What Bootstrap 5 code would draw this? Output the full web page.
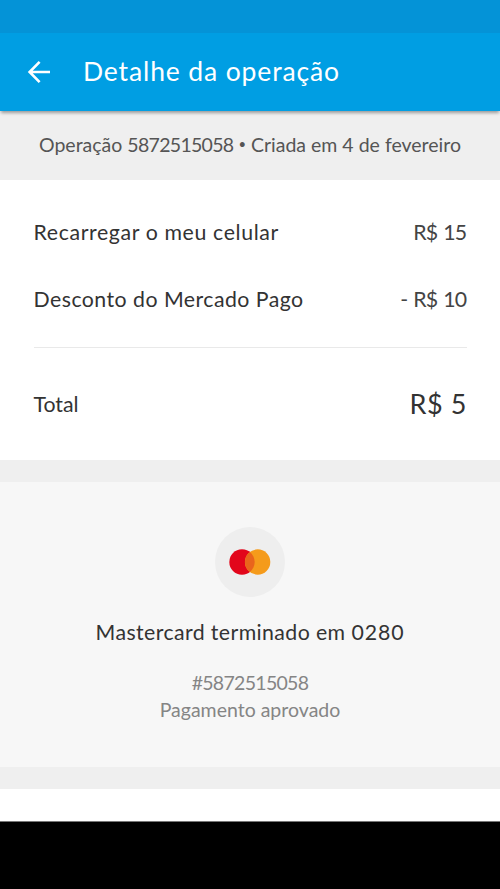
<!DOCTYPE html>
<html lang="pt-BR">
<head>
<meta charset="utf-8">
<meta name="viewport" content="width=device-width, initial-scale=1">
<title>Detalhe da operação</title>
<link href="https://cdn.jsdelivr.net/npm/bootstrap@5.3.0/dist/css/bootstrap.min.css" rel="stylesheet">
<style>
body { font-family: Lato, "Open Sans", sans-serif; color: #333; background: #efefef; height: 889px; overflow: hidden; line-height: 1; }
.status-strip { height: 33px; background: #0493d7; }
.app-bar { height: 78px; background: #009ee3; box-shadow: 0 3px 3px -1px rgba(0,0,0,.35); padding: 0 0 0 26px; z-index: 1; }
.app-title { font-size: 26.5px; margin-left: 31px; padding-bottom: 2px; letter-spacing: .87px; }
.op-info { height: 69px; font-size: 19.5px; color: #555; padding-bottom: 2px; white-space: pre; }
.op-info .digits, .pay-detail .digits { letter-spacing: -.7px; }
.op-info .dot { font-size: 13px; margin: 0 5px; }
.summary { height: 280px; padding: 0 33.5px; }
.line-item { height: 67px; font-size: 21.3px; }
.line-item.first-line { margin-top: 19px; }
.t-rec { letter-spacing: .62px; }
.t-desc { letter-spacing: .46px; }
.amount { color: #444; letter-spacing: -.7px; word-spacing: 1px; }
.divider { height: 1px; background: #e9e9e9; margin-top: 14px; }
.total-line { height: 113px; font-size: 21.3px; }
.total-amount { font-size: 27px; letter-spacing: .6px; margin-right: -.6px; padding-bottom: 2px; }
.payment { height: 285px; background: #f7f7f7; padding-top: 45px; }
.brand-icon { width: 70px; height: 70px; background: #eee; }
.pay-title { font-size: 21.3px; line-height: 26px; margin-top: 22px; letter-spacing: .4px; }
.pay-title .digits { letter-spacing: .9px; }
.pay-detail { font-size: 19.5px; line-height: 27px; color: #858585; margin-top: 24px; }
.section-gap { height: 22px; background: #efefef; }
.page-end { height: 33px; border-bottom: 1px solid #777; }
.nav-strip { background: #000; }
</style>
<script src="https://cdn.jsdelivr.net/npm/bootstrap@5.3.0/dist/js/bootstrap.bundle.min.js"></script>
</head>
<body class="d-flex flex-column">
<div class="status-strip flex-shrink-0"></div>
<header class="app-bar d-flex align-items-center flex-shrink-0 position-relative text-white">
  <svg width="26" height="26" viewBox="0 0 26 26" fill="none" stroke="#fff" stroke-width="2.6" aria-hidden="true"><path d="M24 13H4M13.6 2.8 3.6 13l10 10.2"/></svg>
  <span class="app-title">Detalhe da operação</span>
</header>
<div class="op-info d-flex align-items-center justify-content-center flex-shrink-0"><span>Operação <span class="digits">5872515058</span></span><span class="dot">•</span><span>Criada em 4 de fevereiro</span></div>
<section class="summary bg-white flex-shrink-0">
  <div class="line-item first-line d-flex align-items-center justify-content-between"><span class="t-rec">Recarregar o meu celular</span><span class="amount">R$ 15</span></div>
  <div class="line-item d-flex align-items-center justify-content-between"><span class="t-desc">Desconto do Mercado Pago</span><span class="amount">- R$ 10</span></div>
  <div class="divider"></div>
  <div class="total-line d-flex align-items-center justify-content-between"><span>Total</span><span class="total-amount">R$ 5</span></div>
</section>
<div class="section-gap flex-shrink-0"></div>
<section class="payment d-flex flex-column align-items-center text-center flex-shrink-0">
  <div class="brand-icon rounded-circle d-flex align-items-center justify-content-center">
    <svg width="42" height="26" viewBox="0 0 42 26" role="img" aria-label="Mastercard"><circle cx="13" cy="13" r="12.7" fill="#e2061b"/><circle cx="28.6" cy="13" r="12.7" fill="#f59b1b"/><path d="M20.8 3a12.7 12.7 0 0 1 0 20a12.7 12.7 0 0 1 0-20Z" fill="#e9651c"/></svg>
  </div>
  <div class="pay-title text-nowrap">Mastercard terminado em <span class="digits">0280</span></div>
  <div class="pay-detail"><div class="digits">#5872515058</div><div>Pagamento aprovado</div></div>
</section>
<div class="section-gap flex-shrink-0"></div>
<div class="page-end bg-white flex-shrink-0"></div>
<div class="nav-strip flex-grow-1"></div>
</body>
</html>
